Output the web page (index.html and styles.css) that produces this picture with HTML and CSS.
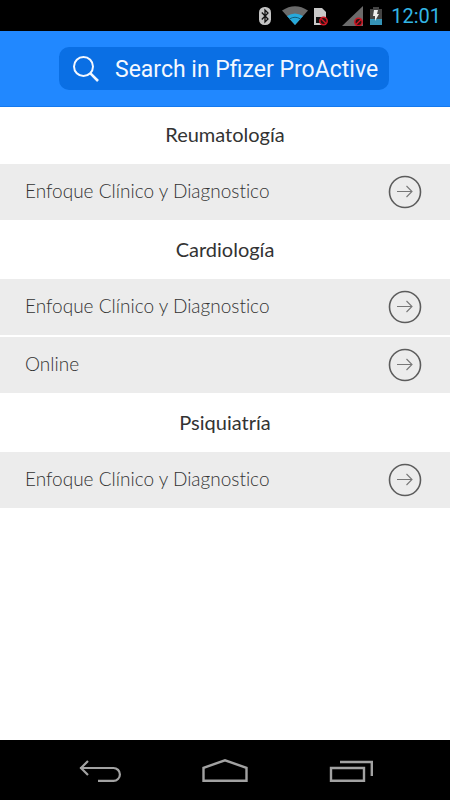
FILE: index.html
```html
<!DOCTYPE html>
<html lang="es">
<head>
<meta charset="utf-8">
<meta name="viewport" content="width=device-width, initial-scale=1">
<title>Pfizer ProActive</title>
<link rel="stylesheet" href="styles.css">
</head>
<body>
<svg class="symbols" aria-hidden="true">
  <symbol id="arrow" viewBox="0 0 34 34">
    <circle cx="17" cy="17" r="15.500" fill="none" stroke="#5c5c5c" stroke-width="1.600"/>
    <path d="M9 16.500h15M18.500 11l5.500 5.500-5.500 5.500" fill="none" stroke="#777" stroke-width="1.100"/>
  </symbol>
</svg>
<div class="status-bar">
  <svg class="status-icons" width="124" height="20" viewBox="0 0 124 20" aria-hidden="true">
    <rect x="0" y="1" width="12" height="18" rx="5.500" fill="#c4c4c4"/>
    <path d="M2.800 6.500l6.200 6.500-3 3V4l3 3-6.200 6.500" fill="none" stroke="#111" stroke-width="1.300"/>
    <path d="M23 4.500Q36-4 49 4.500L36 19z" fill="#6a6a6a"/>
    <path d="M28 10Q36 5 44 10L36 19z" fill="#26a9db"/>
    <path d="M30.500 13Q36 9.500 41.500 13" fill="none" stroke="#145a78" stroke-width="1"/>
    <path d="M55 2h8l4 4v13H55z" fill="#c8c8c8"/>
    <path d="M57 11h8v6h-8z" fill="#111"/>
    <circle cx="64.500" cy="15" r="3.700" fill="#281010" stroke="#cf1624" stroke-width="1.500"/>
    <path d="M62 12.500l5 5" stroke="#cf1624" stroke-width="1.500"/>
    <path d="M83 20L104 0v20z" fill="#6b6b6b"/>
    <circle cx="99.500" cy="16" r="3.700" fill="#281010" stroke="#cf1624" stroke-width="1.500"/>
    <path d="M97 18.500l5-5" stroke="#cf1624" stroke-width="1.500"/>
    <path d="M114 1h6v2h3v11h-12V3h3z" fill="#444"/>
    <path d="M111 13h12v6h-12z" fill="#3594b8"/>
    <path d="M115 4h4l-1 4h2l-4 7v-5h-2z" fill="#eee"/>
  </svg>
  <time class="clock">12:01</time>
</div>
<header class="app-bar">
  <label class="search">
    <svg class="search-icon" width="28" height="28" viewBox="0 0 28 28" aria-hidden="true">
      <circle cx="11.500" cy="11.500" r="9.500" fill="none" stroke="#f4f8ff" stroke-width="2"/>
      <path d="M18.200 18.200L26 26" stroke="#f4f8ff" stroke-width="2.600"/>
    </svg>
    <input class="search-input" type="text" placeholder="Search in Pfizer ProActive" aria-label="Search in Pfizer ProActive">
  </label>
</header>
<main class="content">
  <section class="group">
    <h2 class="heading">Reumatología</h2>
    <ul class="list">
      <li><a class="row" href="#"><span class="row-label">Enfoque Clínico y Diagnostico</span><svg class="arrow" aria-hidden="true"><use href="#arrow"/></svg></a></li>
    </ul>
  </section>
  <section class="group">
    <h2 class="heading">Cardiología</h2>
    <ul class="list">
      <li><a class="row" href="#"><span class="row-label">Enfoque Clínico y Diagnostico</span><svg class="arrow" aria-hidden="true"><use href="#arrow"/></svg></a></li>
      <li><a class="row" href="#"><span class="row-label">Online</span><svg class="arrow" aria-hidden="true"><use href="#arrow"/></svg></a></li>
    </ul>
  </section>
  <section class="group">
    <h2 class="heading">Psiquiatría</h2>
    <ul class="list">
      <li><a class="row" href="#"><span class="row-label">Enfoque Clínico y Diagnostico</span><svg class="arrow" aria-hidden="true"><use href="#arrow"/></svg></a></li>
    </ul>
  </section>
</main>
<nav class="nav-bar">
  <button class="nav-button" type="button" aria-label="Back">
    <svg width="46" height="28" viewBox="0 0 46 28"><path d="M4 10h33.500a6.400 6.400 0 0 1 0 12.800H22M12 3L5 10l7 7" fill="none" stroke="#a2a2a2" stroke-width="2.200"/></svg>
  </button>
  <button class="nav-button" type="button" aria-label="Home">
    <svg width="46" height="28" viewBox="0 0 46 28"><path d="M1.500 22.800V9.800L23 2.300l21.500 7.500v13z" fill="none" stroke="#a2a2a2" stroke-width="2.400"/></svg>
  </button>
  <button class="nav-button" type="button" aria-label="Recent apps">
    <svg width="46" height="28" viewBox="0 0 46 28"><path d="M3 10h33v12.800H3zM12 4h31.800v14" fill="none" stroke="#a2a2a2" stroke-width="2.400"/></svg>
  </button>
</nav>
</body>
</html>
```
FILE: styles.css
```css
* {
  box-sizing: border-box;
}

body {
  margin: 0;
  min-height: 100vh;
  display: flex;
  flex-direction: column;
  background: #fff;
  color: #333;
  font-family: Lato, "Liberation Sans", sans-serif;
  font-variant-ligatures: none;
}

.symbols {
  position: absolute;
  width: 0;
  height: 0;
}

.status-bar {
  display: flex;
  justify-content: flex-end;
  align-items: center;
  gap: 8px;
  height: 31px;
  padding: 1px 9px 0 0;
  background: #000;
}

.clock {
  color: #33b5e5;
  font: 20px/30px Roboto, sans-serif;
}

.app-bar {
  display: flex;
  justify-content: center;
  padding: 16px;
  background: #2188ff;
  border-bottom: 1px solid #1479ee;
}

.search {
  display: flex;
  align-items: center;
  gap: 15px;
  height: 43px;
  width: 330px;
  margin-right: 2px;
  padding-left: 13px;
  border-radius: 10px;
  background: #0a6fe4;
}

.search-icon {
  flex: none;
}

.search-input {
  flex: 1;
  min-width: 0;
  padding: 2px 0 0;
  border: 0;
  outline: 0;
  background: none;
  color: #f4f8ff;
  font: 23px/28px Roboto, sans-serif;
}

.search-input::placeholder {
  color: #f4f8ff;
  opacity: 1;
}

.content {
  flex: 1;
}

.heading {
  margin: 0;
  padding: 13px 0 16px;
  font-size: 20px;
  line-height: 28px;
  font-weight: 400;
  text-align: center;
}

.group + .group .heading {
  padding-top: 15px;
}

.list {
  display: flex;
  flex-direction: column;
  gap: 2px;
  margin: 0;
  padding: 0;
  list-style: none;
}

.row {
  display: flex;
  align-items: center;
  justify-content: space-between;
  height: 56px;
  padding: 0 28px 0 25px;
  background: #ececec;
  color: #333;
  font-size: 19px;
  font-weight: 300;
  line-height: 28px;
  text-decoration: none;
}

.row-label {
  padding-bottom: 2px;
}

.arrow {
  width: 34px;
  height: 34px;
}

.nav-bar {
  display: flex;
  justify-content: center;
  gap: 80px;
  height: 60px;
  background: #000;
}

.nav-button {
  display: flex;
  align-items: center;
  padding: 4px 0 0;
  border: 0;
  background: none;
}
```
